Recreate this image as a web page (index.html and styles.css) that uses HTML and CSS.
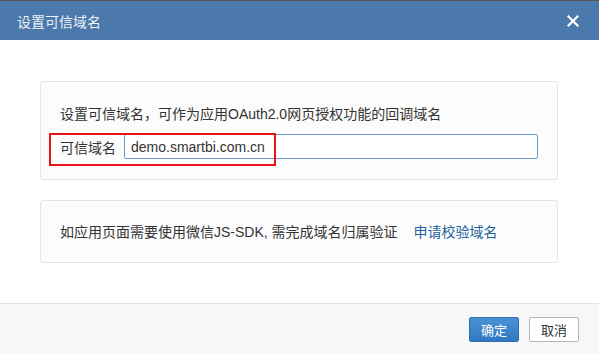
FILE: index.html
```html
<!DOCTYPE html>
<html lang="zh-CN">
<head>
    <meta charset="UTF-8">
    <meta name="viewport" content="width=device-width, initial-scale=1.0">
    <title>设置可信域名</title>
    <link rel="stylesheet" href="styles.css">
</head>
<body>

    <div class="dialog">
        <div class="dialog-header">
            <span class="dialog-title">设置可信域名</span>
            <span class="close-btn">
                <svg width="12" height="12" viewBox="0 0 12 12">
                    <path d="M1.5 1.5 L10.5 10.5 M10.5 1.5 L1.5 10.5" stroke="#fff" stroke-width="2.2" stroke-linecap="square"/>
                </svg>
            </span>
        </div>

        <div class="dialog-body">
            <div class="panel">
                <p class="panel-text">设置可信域名，可作为应用OAuth2.0网页授权功能的回调域名</p>
                <div class="field-row">
                    <label class="field-label">可信域名</label>
                    <input class="field-input" type="text" value="demo.smartbi.com.cn">
                    <div class="highlight-box"></div>
                </div>
            </div>

            <div class="panel">
                <p class="panel-text">如应用页面需要使用微信JS-SDK, 需完成域名归属验证<a class="link" href="#">申请校验域名</a></p>
            </div>
        </div>

        <div class="dialog-footer">
            <button class="btn btn-primary">确定</button>
            <button class="btn btn-default">取消</button>
        </div>
    </div>

</body>
</html>
```

FILE: styles.css
```css
body {
    margin: 0;
    font-family: "Liberation Sans", "Noto Sans CJK SC", sans-serif;
    font-size: 14px;
    color: #333333;
    background-color: #ffffff;
}

.dialog {
    width: 599px;
    height: 354px;
    display: flex;
    flex-direction: column;
    border-top: 1px solid #555555;
    box-sizing: border-box;
}

.dialog-header {
    height: 39px;
    background-color: #4b79ab;
    display: flex;
    align-items: center;
    justify-content: space-between;
    padding: 0 20px 0 17px;
    flex-shrink: 0;
}

.dialog-title {
    color: #eef2f7;
    font-size: 14px;
}

.close-btn {
    display: flex;
    width: 12px;
    height: 12px;
    margin-top: 1px;
    cursor: pointer;
}

.dialog-body {
    flex: 1;
    padding: 41px 41px 0 40px;
    display: flex;
    flex-direction: column;
    gap: 20px;
}

.panel {
    border: 1px solid #e4e4e4;
    border-radius: 3px;
    background-color: #fcfcfc;
    padding: 22px 19px 20px 19px;
}

.panel + .panel {
    padding: 21px 19px 20px 19px;
}

.panel-text {
    margin: 0;
    line-height: 20px;
}

.field-row {
    position: relative;
    display: flex;
    align-items: center;
    margin-top: 10px;
}

.field-label {
    width: 64px;
    flex-shrink: 0;
}

.field-input {
    width: 414px;
    height: 25px;
    box-sizing: border-box;
    border: 1px solid #6c9bce;
    border-radius: 2px;
    padding: 0 6px;
    font-family: "Liberation Sans", sans-serif;
    font-size: 14px;
    color: #333333;
    background-color: #ffffff;
    outline: none;
}

.highlight-box {
    position: absolute;
    left: -11px;
    top: -1px;
    width: 227px;
    height: 33px;
    box-sizing: border-box;
    border: 2px solid #e8121b;
    pointer-events: none;
}

.link {
    color: #1f5f9f;
    text-decoration: none;
    margin-left: 16px;
}

.dialog-footer {
    height: 50px;
    border-top: 1px solid #e2e2e2;
    background-color: #f7f7f7;
    display: flex;
    align-items: center;
    justify-content: flex-end;
    gap: 10px;
    padding-right: 20px;
    flex-shrink: 0;
}

.btn {
    width: 50px;
    height: 25px;
    border-radius: 2px;
    font-family: "Liberation Sans", "Noto Sans CJK SC", sans-serif;
    font-size: 13px;
    padding: 0;
    cursor: pointer;
}

.btn-primary {
    background: linear-gradient(#4b92d4, #2f79c2);
    border: 1px solid #2f70b4;
    color: #ffffff;
}

.btn-default {
    background-color: #ffffff;
    border: 1px solid #b5b5b5;
    color: #333333;
}
```
